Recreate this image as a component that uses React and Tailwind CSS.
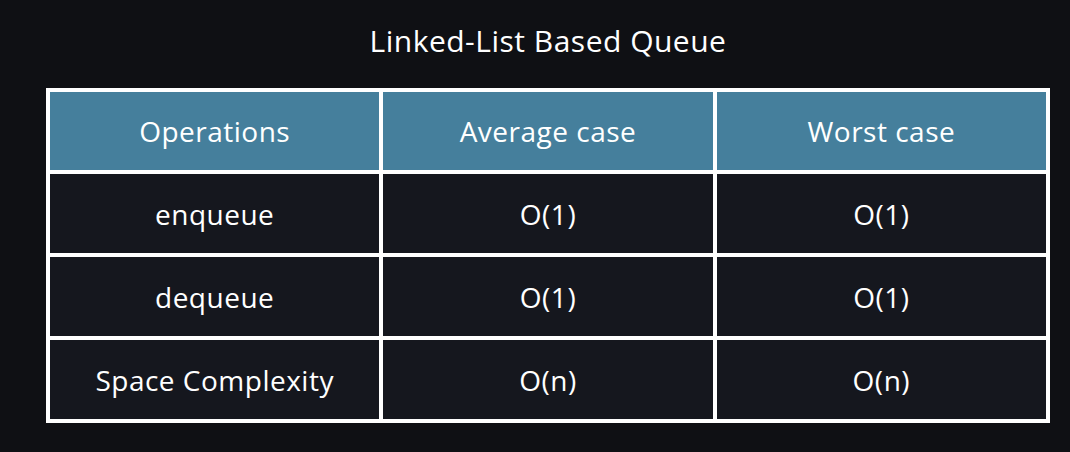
export default function App() {
  const rows = [
    ["enqueue", "O(1)", "O(1)"],
    ["dequeue", "O(1)", "O(1)"],
    ["Space Complexity", "O(n)", "O(n)"],
  ];
  const font = { fontFamily: '"Open Sans", "Noto Sans", sans-serif' };
  return (
    <div className="w-[1070px] h-[452px] bg-[#0f1014] pl-[46px] pr-[20px] flex flex-col" style={font}>
      <div className="h-[88px] flex items-center justify-center text-white text-[30px] font-medium tracking-[0.5px] pb-[8px]">
        Linked-List Based Queue
      </div>
      <div className="bg-white p-[4px] grid grid-cols-3 gap-[4px]">
        {["Operations", "Average case", "Worst case"].map((h) => (
          <div key={h} className="h-[78px] bg-[#457f9c] flex items-center justify-center text-white text-[28px] font-medium tracking-[0.5px]">
            {h}
          </div>
        ))}
        {rows.map((r, i) =>
          r.map((c, j) => (
            <div key={i + "-" + j} className="h-[79px] bg-[#15171e] flex items-center justify-center text-white text-[28px] font-medium tracking-[0.5px]">
              {c}
            </div>
          ))
        )}
      </div>
    </div>
  );
}
